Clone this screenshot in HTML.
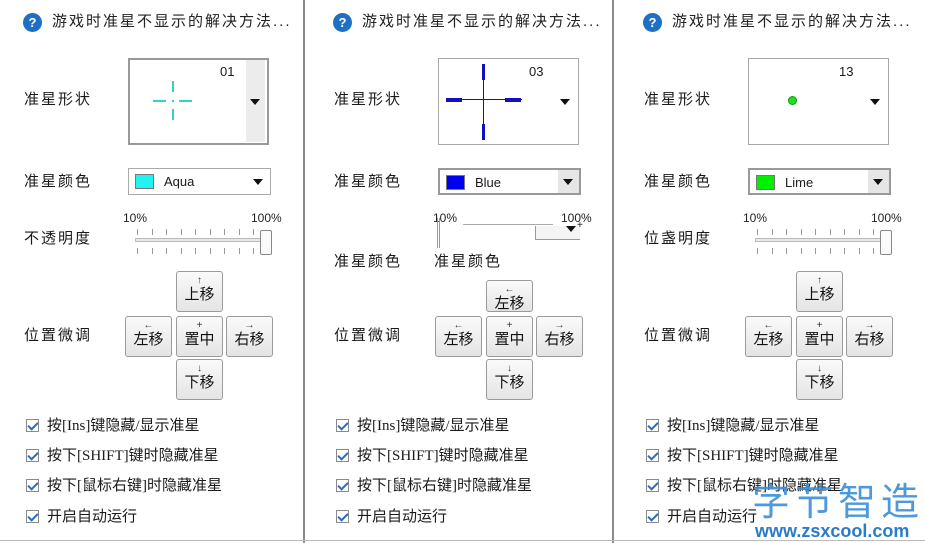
<!DOCTYPE html>
<html><head><meta charset="utf-8"><style>
*{margin:0;padding:0;box-sizing:border-box}
body{width:925px;height:543px;background:#fff;position:relative;overflow:hidden;font-family:"Liberation Sans","Noto Sans CJK SC",sans-serif;color:#1a1a1a}
.a{position:absolute}
.lbl{position:absolute;font-size:15px;letter-spacing:2px;line-height:18px;white-space:nowrap}
.title{position:absolute;font-size:15px;letter-spacing:2px;line-height:18px;white-space:nowrap;color:#222}
.help{position:absolute;width:19px;height:19px;border-radius:50%;background:#1f6fc4;color:#fff;font-weight:bold;font-size:13px;text-align:center;line-height:19px}
.shape{position:absolute;width:141px;height:87px;border:1px solid #a8a8a8;background:#fff}
.num{position:absolute;font-size:13px;line-height:14px}
.tri{position:absolute;width:0;height:0;border-left:5px solid transparent;border-right:5px solid transparent;border-top:6px solid #111}
.combo{position:absolute;width:143px;height:27px;border:1px solid #aaa;background:#fff}
.sw{position:absolute;left:6px;top:5px;width:19px;height:15px;border:1px solid #777}
.ctext{position:absolute;left:35px;top:5px;font-size:13px;line-height:16px}
.pct{position:absolute;font-size:12px;line-height:13px;color:#222}
.track{position:absolute;height:4px;border:1px solid #bbb;background:#e8e8e8}
.tick{position:absolute;width:1px;height:6px;background:#999}
.thumb{position:absolute;width:12px;height:25px;border:1px solid #888;border-radius:2px;background:#fafafa}
.btn{position:absolute;width:47px;height:41px;border:1px solid #9a9a9a;border-radius:3px;background:linear-gradient(#fafafa,#e4e4e4);text-align:center;font-size:15px;line-height:16px;color:#111}
.btn i{display:block;font-style:normal;font-size:10px;line-height:12px;margin-top:3px;color:#333}
.cb{position:absolute;width:13px;height:13px;border:1px solid #8a8a8a;background:#fff}
.cb:after{content:"";position:absolute;left:3px;top:0px;width:4px;height:8px;border:solid #2a6cc0;border-width:0 2px 2px 0;transform:rotate(45deg)}
.ct{position:absolute;font-size:15px;line-height:16px;white-space:nowrap;font-family:"Liberation Serif","Noto Sans CJK SC",serif}
.sep{position:absolute;top:0;width:2px;height:543px;background:#8a8a8a}
</style></head><body>

<div class="sep" style="left:303px"></div>
<div class="sep" style="left:612px"></div>
<div class="a" style="left:0;top:540px;width:925px;height:1px;background:#bbb"></div>

<!-- PANEL 1 -->
<div class="help" style="left:23px;top:13px">?</div>
<div class="title" style="left:52px;top:13px">游戏时准星不显示的解决方法...</div>
<div class="lbl" style="left:24px;top:91px">准星形状</div>
<div class="shape" style="left:128px;top:58px;border:2px solid #999"></div>
<div class="a" style="left:246px;top:60px;width:19px;height:82px;background:#ececec"></div>
<div class="num" style="left:220px;top:65px">01</div>
<div class="tri" style="left:250px;top:99px"></div>
<div class="a" style="left:153px;top:100px;width:13px;height:2px;background:#35d0c8"></div>
<div class="a" style="left:179px;top:100px;width:13px;height:2px;background:#35d0c8"></div>
<div class="a" style="left:172px;top:81px;width:2px;height:11px;background:#35d0c8"></div>
<div class="a" style="left:172px;top:109px;width:2px;height:11px;background:#35d0c8"></div>
<div class="a" style="left:172px;top:100px;width:2px;height:2px;background:#35d0c8"></div>
<div class="lbl" style="left:24px;top:173px">准星颜色</div>
<div class="combo" style="left:128px;top:168px"><div class="sw" style="background:#22f3f0"></div><div class="ctext">Aqua</div><div class="tri" style="left:124px;top:10px"></div></div>
<div class="pct" style="left:123px;top:212px">10%</div>
<div class="pct" style="left:251px;top:212px">100%</div>
<div class="lbl" style="left:24px;top:230px">不透明度</div>
<div class="track" style="left:135px;top:238px;width:132px"></div>
<div class="a" style="left:137px;top:229px">
<div class="tick" style="left:0;top:0"></div><div class="tick" style="left:15px;top:0"></div><div class="tick" style="left:29px;top:0"></div><div class="tick" style="left:44px;top:0"></div><div class="tick" style="left:58px;top:0"></div><div class="tick" style="left:73px;top:0"></div><div class="tick" style="left:87px;top:0"></div><div class="tick" style="left:102px;top:0"></div><div class="tick" style="left:116px;top:0"></div>
<div class="tick" style="left:0;top:19px"></div><div class="tick" style="left:15px;top:19px"></div><div class="tick" style="left:29px;top:19px"></div><div class="tick" style="left:44px;top:19px"></div><div class="tick" style="left:58px;top:19px"></div><div class="tick" style="left:73px;top:19px"></div><div class="tick" style="left:87px;top:19px"></div><div class="tick" style="left:102px;top:19px"></div><div class="tick" style="left:116px;top:19px"></div>
</div>
<div class="thumb" style="left:260px;top:230px"></div>
<div class="btn" style="left:176px;top:271px"><i>↑</i>上移</div>
<div class="lbl" style="left:24px;top:327px">位置微调</div>
<div class="btn" style="left:125px;top:316px"><i>←</i>左移</div>
<div class="btn" style="left:176px;top:316px"><i>+</i>置中</div>
<div class="btn" style="left:226px;top:316px"><i>→</i>右移</div>
<div class="btn" style="left:176px;top:359px"><i>↓</i>下移</div>
<div class="cb" style="left:26px;top:419px"></div><div class="ct" style="left:47px;top:418px">按[Ins]键隐藏/显示准星</div>
<div class="cb" style="left:26px;top:449px"></div><div class="ct" style="left:47px;top:448px">按下[SHIFT]键时隐藏准星</div>
<div class="cb" style="left:26px;top:479px"></div><div class="ct" style="left:47px;top:478px">按下[鼠标右键]时隐藏准星</div>
<div class="cb" style="left:26px;top:510px"></div><div class="ct" style="left:47px;top:509px">开启自动运行</div>

<!-- PANEL 2 -->
<div class="help" style="left:333px;top:13px">?</div>
<div class="title" style="left:362px;top:13px">游戏时准星不显示的解决方法...</div>
<div class="lbl" style="left:334px;top:91px">准星形状</div>
<div class="shape" style="left:438px;top:58px"></div>
<div class="num" style="left:529px;top:65px">03</div>
<div class="tri" style="left:560px;top:99px"></div>
<div class="a" style="left:446px;top:99px;width:76px;height:1px;background:#1010c0"></div>
<div class="a" style="left:446px;top:98px;width:16px;height:4px;background:#1010c0"></div>
<div class="a" style="left:505px;top:98px;width:16px;height:4px;background:#1010c0"></div>
<div class="a" style="left:483px;top:64px;width:1px;height:76px;background:#1010c0"></div>
<div class="a" style="left:482px;top:64px;width:3px;height:16px;background:#1010c0"></div>
<div class="a" style="left:482px;top:124px;width:3px;height:16px;background:#1010c0"></div>
<div class="lbl" style="left:334px;top:173px">准星颜色</div>
<div class="combo" style="left:438px;top:168px;border:2px solid #999"><div class="sw" style="background:#0000f0"></div><div class="ctext">Blue</div><div class="a" style="left:118px;top:0;width:21px;height:23px;background:#e6e6e6"></div><div class="tri" style="left:123px;top:9px"></div></div>
<div class="pct" style="left:433px;top:212px">10%</div>
<div class="pct" style="left:561px;top:212px">100%</div>
<div class="a" style="left:437px;top:218px;width:3px;height:30px;border-left:1px solid #999;border-right:1px solid #999"></div>
<div class="a" style="left:463px;top:224px;width:90px;height:1px;background:#aaa"></div>
<div class="a" style="left:535px;top:226px;width:45px;height:14px;border-bottom:1px solid #999;border-left:1px solid #999;background:#f4f4f4"></div>
<div class="tri" style="left:566px;top:226px"></div><div class="a" style="left:577px;top:220px;font-size:10px">+</div>
<div class="lbl" style="left:334px;top:253px">准星颜色</div>
<div class="lbl" style="left:434px;top:253px">准星颜色</div>
<div class="btn" style="left:486px;top:280px;height:32px"><i>←</i>左移</div>
<div class="lbl" style="left:334px;top:327px">位置微调</div>
<div class="btn" style="left:435px;top:316px"><i>←</i>左移</div>
<div class="btn" style="left:486px;top:316px"><i>+</i>置中</div>
<div class="btn" style="left:536px;top:316px"><i>→</i>右移</div>
<div class="btn" style="left:486px;top:359px"><i>↓</i>下移</div>
<div class="cb" style="left:336px;top:419px"></div><div class="ct" style="left:357px;top:418px">按[Ins]键隐藏/显示准星</div>
<div class="cb" style="left:336px;top:449px"></div><div class="ct" style="left:357px;top:448px">按下[SHIFT]键时隐藏准星</div>
<div class="cb" style="left:336px;top:479px"></div><div class="ct" style="left:357px;top:478px">按下[鼠标右键]时隐藏准星</div>
<div class="cb" style="left:336px;top:510px"></div><div class="ct" style="left:357px;top:509px">开启自动运行</div>

<!-- PANEL 3 -->
<div class="help" style="left:643px;top:13px">?</div>
<div class="title" style="left:672px;top:13px">游戏时准星不显示的解决方法...</div>
<div class="lbl" style="left:644px;top:91px">准星形状</div>
<div class="shape" style="left:748px;top:58px"></div>
<div class="num" style="left:839px;top:65px">13</div>
<div class="tri" style="left:870px;top:99px"></div>
<div class="a" style="left:788px;top:96px;width:9px;height:9px;border-radius:50%;background:#20e020;border:1px solid #0a9a0a"></div>
<div class="lbl" style="left:644px;top:173px">准星颜色</div>
<div class="combo" style="left:748px;top:168px;border:2px solid #999"><div class="sw" style="background:#00f000"></div><div class="ctext">Lime</div><div class="a" style="left:118px;top:0;width:21px;height:23px;background:#e6e6e6"></div><div class="tri" style="left:123px;top:9px"></div></div>
<div class="pct" style="left:743px;top:212px">10%</div>
<div class="pct" style="left:871px;top:212px">100%</div>
<div class="lbl" style="left:644px;top:230px">位盏明度</div>
<div class="track" style="left:755px;top:238px;width:132px"></div>
<div class="a" style="left:757px;top:229px">
<div class="tick" style="left:0;top:0"></div><div class="tick" style="left:15px;top:0"></div><div class="tick" style="left:29px;top:0"></div><div class="tick" style="left:44px;top:0"></div><div class="tick" style="left:58px;top:0"></div><div class="tick" style="left:73px;top:0"></div><div class="tick" style="left:87px;top:0"></div><div class="tick" style="left:102px;top:0"></div><div class="tick" style="left:116px;top:0"></div>
<div class="tick" style="left:0;top:19px"></div><div class="tick" style="left:15px;top:19px"></div><div class="tick" style="left:29px;top:19px"></div><div class="tick" style="left:44px;top:19px"></div><div class="tick" style="left:58px;top:19px"></div><div class="tick" style="left:73px;top:19px"></div><div class="tick" style="left:87px;top:19px"></div><div class="tick" style="left:102px;top:19px"></div><div class="tick" style="left:116px;top:19px"></div>
</div>
<div class="thumb" style="left:880px;top:230px"></div>
<div class="btn" style="left:796px;top:271px"><i>↑</i>上移</div>
<div class="lbl" style="left:644px;top:327px">位置微调</div>
<div class="btn" style="left:745px;top:316px"><i>←</i>左移</div>
<div class="btn" style="left:796px;top:316px"><i>+</i>置中</div>
<div class="btn" style="left:846px;top:316px"><i>→</i>右移</div>
<div class="btn" style="left:796px;top:359px"><i>↓</i>下移</div>
<div class="cb" style="left:646px;top:419px"></div><div class="ct" style="left:667px;top:418px">按[Ins]键隐藏/显示准星</div>
<div class="cb" style="left:646px;top:449px"></div><div class="ct" style="left:667px;top:448px">按下[SHIFT]键时隐藏准星</div>
<div class="cb" style="left:646px;top:479px"></div><div class="ct" style="left:667px;top:478px">按下[鼠标右键]时隐藏准星</div>
<div class="cb" style="left:646px;top:510px"></div><div class="ct" style="left:667px;top:509px">开启自动运行</div>

<!-- watermark -->
<div class="a" style="left:752px;top:478px;font-size:38px;line-height:42px;letter-spacing:5px;color:#3a8ed8;font-family:'Noto Sans CJK SC',sans-serif;white-space:nowrap;opacity:.9">字节智造</div>
<div class="a" style="left:755px;top:521px;font-size:18px;line-height:20px;color:#2a7cc8;font-weight:bold;white-space:nowrap">www.zsxcool.com</div>
</body></html>
